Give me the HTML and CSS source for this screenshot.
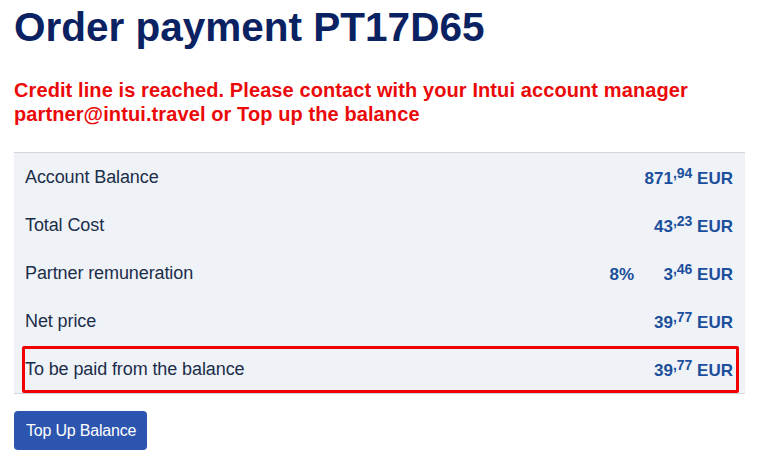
FILE: index.html
```html
<!DOCTYPE html>
<html lang="en">

<head>
    <meta charset="UTF-8">
    <title>Order payment</title>
    <link rel="stylesheet" href="styles.css">
</head>

<body>

    <h1>Order payment PT17D65</h1>

    <p class="alert">Credit line is reached. Please contact with your Intui account manager partner@intui.travel or Top up the balance</p>

    <div class="summary">
        <div class="row">
            <span class="label">Account Balance</span>
            <span class="pct"></span>
            <span class="amount">871<sup>,94</sup> EUR</span>
        </div>
        <div class="row">
            <span class="label">Total Cost</span>
            <span class="pct"></span>
            <span class="amount">43<sup>,23</sup> EUR</span>
        </div>
        <div class="row">
            <span class="label">Partner remuneration</span>
            <span class="pct">8%</span>
            <span class="amount">3<sup>,46</sup> EUR</span>
        </div>
        <div class="row">
            <span class="label">Net price</span>
            <span class="pct"></span>
            <span class="amount">39<sup>,77</sup> EUR</span>
        </div>
        <!-- highlighted row -->
        <div class="row row-hl">
            <span class="label">To be paid from the balance</span>
            <span class="pct"></span>
            <span class="amount">39<sup>,77</sup> EUR</span>
        </div>
    </div>

    <a class="btn" href="#">Top Up Balance</a>

</body>
</html>
```

FILE: styles.css
```css
:root {
    --navy:   #0b2262;
    --red:    #ea0a0a;
    --blue:   #1b4f9c;
    --text:   #1c2d4a;
    --panel:  #eff3f7;
    --border: #d3d6da;
    --btn:    #2c55b0;
}

* {
    box-sizing: border-box;
    margin: 0;
    padding: 0;
}

body {
    font-family: 'Liberation Sans', Arial, sans-serif;
    background: #fff;
    color: var(--text);
    padding: 0 17px 0 14px;
}

/* ── Header ── */
h1 {
    font-size: 40.5px;
    font-weight: 700;
    color: var(--navy);
    line-height: 48px;
    padding-top: 3px;
}

.alert {
    font-size: 20px;
    font-weight: 700;
    color: var(--red);
    line-height: 24px;
    margin-top: 27px;
    letter-spacing: 0.1px;
}

/* ── Summary table ── */
.summary {
    margin-top: 26px;
    background: var(--panel);
    border-top: 1px solid var(--border);
    border-bottom: 1px solid var(--border);
}

.row {
    display: grid;
    grid-template-columns: 1fr auto minmax(85px, auto);
    column-gap: 14px;
    align-items: center;
    height: 48px;
    padding: 0 12px 0 11px;
    position: relative;
}

.label {
    font-size: 18px;
    letter-spacing: -0.1px;
}

.pct,
.amount {
    font-size: 17px;
    font-weight: 700;
    color: var(--blue);
    text-align: right;
    white-space: nowrap;
    padding-top: 3px;
}

.amount sup {
    font-size: 14px;
    vertical-align: 6px;
    line-height: 0;
}

.row-hl::after {
    content: '';
    position: absolute;
    top: 1px;
    bottom: 0;
    left: 8px;
    right: 6px;
    border: 3px solid #f00000;
    border-radius: 2px;
    pointer-events: none;
}

/* ── Button ── */
.btn {
    display: inline-block;
    margin-top: 17px;
    background: var(--btn);
    color: #fff;
    font-size: 16px;
    text-decoration: none;
    line-height: 39px;
    padding: 0 11px 0 12px;
    border-radius: 4px;
    letter-spacing: -0.2px;
}
```
